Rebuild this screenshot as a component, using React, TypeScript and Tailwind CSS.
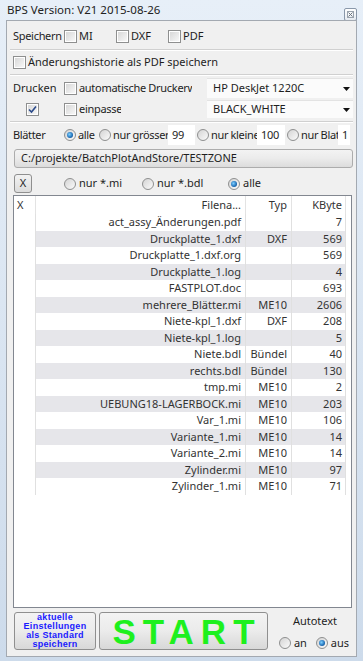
import React from 'react';

const rows: [string, string, string][] = [
  ['act_assy_Änderungen.pdf', '', '7'],
  ['Druckplatte_1.dxf', 'DXF', '569'],
  ['Druckplatte_1.dxf.org', '', '569'],
  ['Druckplatte_1.log', '', '4'],
  ['FASTPLOT.doc', '', '693'],
  ['mehrere_Blätter.mi', 'ME10', '2606'],
  ['Niete-kpl_1.dxf', 'DXF', '208'],
  ['Niete-kpl_1.log', '', '5'],
  ['Niete.bdl', 'Bündel', '40'],
  ['rechts.bdl', 'Bündel', '130'],
  ['tmp.mi', 'ME10', '2'],
  ['UEBUNG18-LAGERBOCK.mi', 'ME10', '203'],
  ['Var_1.mi', 'ME10', '106'],
  ['Variante_1.mi', 'ME10', '14'],
  ['Variante_2.mi', 'ME10', '14'],
  ['Zylinder.mi', 'ME10', '97'],
  ['Zylinder_1.mi', 'ME10', '71'],
];

// Windows-7 artige Checkbox
const Check = ({ checked = false }: { checked?: boolean }) => (
  <span className="w-[13px] h-[13px] shrink-0 border border-[#8e8f8f] bg-white p-[1px] flex">
    <span className="flex-1 flex items-center justify-center bg-linear-to-br from-[#d8d8d8] to-[#f7f7f7]">
      {checked && (
        <svg width="9" height="9" viewBox="0 0 9 9">
          <path d="M1 4.5 L3.5 7 L8 1.5" fill="none" stroke="#2a4a8a" strokeWidth="1.6" />
        </svg>
      )}
    </span>
  </span>
);

const Radio = ({ checked = false }: { checked?: boolean }) => (
  <span className="w-[12px] h-[12px] shrink-0 rounded-full border border-[#8e8f8f] bg-linear-to-br from-[#d4d4d4] to-[#fbfbfb] flex items-center justify-center">
    {checked && (
      <span className="w-[6px] h-[6px] rounded-full bg-[radial-gradient(circle_at_40%_40%,#7fd0ff,#1f6fb8_60%,#0d3d70)]" />
    )}
  </span>
);

const Separator = ({ className = '' }: { className?: string }) => (
  <div className={`mx-[3px] h-[2px] border-t border-[#d0d0d0] border-b border-b-white ${className}`} />
);

const Combo = ({ text }: { text: string }) => (
  <div className="w-[146px] h-full flex items-center justify-between bg-[#fbfbfb] border-t border-[#e3e3e3] pl-[6px] pr-[3px]">
    <span>{text}</span>
    <svg width="7" height="4" viewBox="0 0 7 4">
      <path d="M0 0 H7 L3.5 4 Z" fill="#111" />
    </svg>
  </div>
);

const NumBox = ({ value, w }: { value: string; w: string }) => (
  <span className={`${w} h-[20px] bg-white flex items-center pl-[4px] shrink-0 overflow-hidden`}>{value}</span>
);

export default function App() {
  return (
    <div className="w-[363px] h-[661px] flex flex-col bg-linear-to-b from-[#e7eff8] to-[#cddbeb] font-['Noto_Sans',sans-serif] text-[11px] text-[#1e1e1e] overflow-hidden">
      {/* Titelleiste */}
      <div className="h-[20px] shrink-0 flex items-center justify-between pl-[7px] pr-[6px]">
        <span className="text-[11.5px] text-[#222] leading-none">BPS Version: V21 2015-08-26</span>
        <span className="w-[13px] h-[13px] mt-[8px] border border-[#8a98aa] rounded-[2px] bg-linear-to-b from-white to-[#e6ebf1] flex items-center justify-center">
          <svg width="7" height="7" viewBox="0 0 7 7">
            <rect x="0.5" y="0.5" width="6" height="6" fill="none" stroke="#9aa3ad" />
            <path d="M1.5 1.5 L5.5 5.5 M5.5 1.5 L1.5 5.5" stroke="#6b747e" />
          </svg>
        </span>
      </div>

      {/* Inhalt */}
      <div className="flex-1 mx-[6px] mb-[4px] border border-[#a3a9b1] bg-[#f0f0f0] flex flex-col pt-[4px] pb-[6px]">
        {/* Speichern */}
        <div className="h-[22px] flex items-center pl-[6px]">
          <span className="w-[51px] tracking-[-0.3px]">Speichern</span>
          <span className="w-[52px] flex items-center gap-[2px]"><Check />MI</span>
          <span className="w-[52px] flex items-center gap-[2px]"><Check />DXF</span>
          <span className="flex items-center gap-[2px]"><Check />PDF</span>
        </div>
        <Separator className="mt-[2px]" />

        <div className="h-[22px] flex items-center pl-[6px] gap-[2px]">
          <Check />
          <span>Änderungshistorie als PDF speichern</span>
        </div>
        <Separator className="mt-[1px]" />

        {/* Drucken */}
        <div className="mt-[2px] h-[20px] flex items-center pl-[6px]">
          <span className="w-[51px]">Drucken</span>
          <Check />
          <span className="w-[130px] pl-[2px] flex">
            <span className="w-[113px] overflow-hidden whitespace-nowrap tracking-[-0.3px]">automatische Druckerwahl</span>
          </span>
          <Combo text="HP DeskJet 1220C" />
        </div>
        <div className="mt-[2px] h-[18px] flex items-center pl-[6px]">
          <span className="w-[51px] pl-[13px] flex"><Check checked /></span>
          <Check />
          <span className="w-[130px] pl-[2px] flex">
            <span className="w-[42px] overflow-hidden whitespace-nowrap tracking-[-0.3px]">einpassen</span>
          </span>
          <Combo text="BLACK_WHITE" />
        </div>
        <Separator className="mt-[3px]" />

        {/* Blätter */}
        <div className="mt-[2px] h-[20px] flex items-center pl-[6px] tracking-[-0.35px]">
          <span className="w-[51px]">Blätter</span>
          <Radio checked />
          <span className="w-[23px] pl-[2px]">alle</span>
          <Radio />
          <span className="w-[57px] pl-[2px] whitespace-nowrap">nur grösser</span>
          <NumBox value="99" w="w-[27px]" />
          <span className="ml-[2px] flex"><Radio /></span>
          <span className="w-[48px] pl-[2px] whitespace-nowrap">nur kleine</span>
          <NumBox value="100" w="w-[28px]" />
          <span className="ml-[2px] flex"><Radio /></span>
          <span className="w-[39px] pl-[2px] whitespace-nowrap overflow-hidden">nur Blatt</span>
          <NumBox value="1" w="w-[12px]" />
        </div>

        {/* Pfad */}
        <div className="mt-[4px] ml-[7px] mr-[3px] h-[19px] flex items-center pl-[6px] border border-[#acacac] rounded-[3px] bg-linear-to-b from-[#f3f3f3] via-[#ebebeb] to-[#dcdcdc]">
          C:/projekte/BatchPlotAndStore/TESTZONE
        </div>

        {/* Filter */}
        <div className="mt-[6px] h-[19px] flex items-center ml-[7px]">
          <span className="w-[18px] h-[19px] flex items-center justify-center border border-[#8f8f8f] rounded-[3px] bg-linear-to-b from-[#f3f3f3] to-[#dcdcdc]">X</span>
          <span className="ml-[32px] w-[78px] flex items-center gap-[3px]"><Radio />nur *.mi</span>
          <span className="w-[86px] flex items-center gap-[3px]"><Radio />nur *.bdl</span>
          <span className="flex items-center gap-[3px]"><Radio checked />alle</span>
        </div>

        {/* Tabelle */}
        <div className="mt-[2px] ml-[6px] mr-[4px] flex-1 border border-[#828790] bg-white text-[#333] overflow-hidden">
          <div className="h-[18px] flex items-center">
            <span className="w-[22px] h-full flex items-center pl-[3px] border-r border-[#e3e3e3]">X</span>
            <span className="w-[210px] h-full flex items-center justify-end pr-[4px] border-r border-[#e3e3e3]">Filena...</span>
            <span className="w-[46px] h-full flex items-center justify-end pr-[4px] border-r border-[#e3e3e3]">Typ</span>
            <span className="w-[54px] h-full flex items-center justify-end pr-[3px] border-r border-[#e3e3e3]">KByte</span>
          </div>
          {rows.map((r, i) => (
            <div key={i} className={`h-[16.5px] w-[332px] flex items-center ${i % 2 === 1 ? 'bg-[#e6e6ea]' : 'bg-white'}`}>
              <span className="w-[22px] h-full border-r border-[#e0e0e0] bg-white" />
              <span className="w-[210px] h-full flex items-center justify-end pr-[4px] border-r border-[#e0e0e0] whitespace-nowrap">{r[0]}</span>
              <span className="w-[46px] h-full flex items-center justify-end pr-[4px] border-r border-[#e0e0e0]">{r[1]}</span>
              <span className="w-[54px] h-full flex items-center justify-end pr-[3px] border-r border-[#e0e0e0]">{r[2]}</span>
            </div>
          ))}
        </div>

        {/* Unten */}
        <div className="mt-[4px] h-[38px] flex ml-[7px]">
          <div className="w-[82px] h-full border border-[#8f8f8f] rounded-[3px] bg-linear-to-b from-[#f3f3f3] via-[#ebebeb] to-[#d8d8d8] flex flex-col items-center justify-center font-['Liberation_Sans',Arial,sans-serif] font-bold text-[9px] leading-[9px] tracking-[0.3px] text-[#1a1aff]">
            <span>aktuelle</span>
            <span>Einstellungen</span>
            <span>als Standard</span>
            <span>speichern</span>
          </div>
          <div className="ml-[3px] w-[169px] h-full border border-[#8f8f8f] rounded-[3px] bg-linear-to-b from-[#f3f3f3] via-[#ebebeb] to-[#d8d8d8] flex items-center justify-center pl-[7px] font-['Liberation_Sans',Arial,sans-serif] font-bold text-[35px] leading-none tracking-[7px] text-[#1ef01e]">
            START
          </div>
          <div className="flex-1 flex flex-col items-center justify-center">
            <span className="mt-[2px] pl-[6px]">Autotext</span>
            <div className="mt-[5px] flex items-center pl-[4px]">
              <span className="flex items-center gap-[3px]"><Radio />an</span>
              <span className="ml-[9px] flex items-center gap-[3px]"><Radio checked />aus</span>
            </div>
          </div>
        </div>
      </div>
    </div>
  );
}
